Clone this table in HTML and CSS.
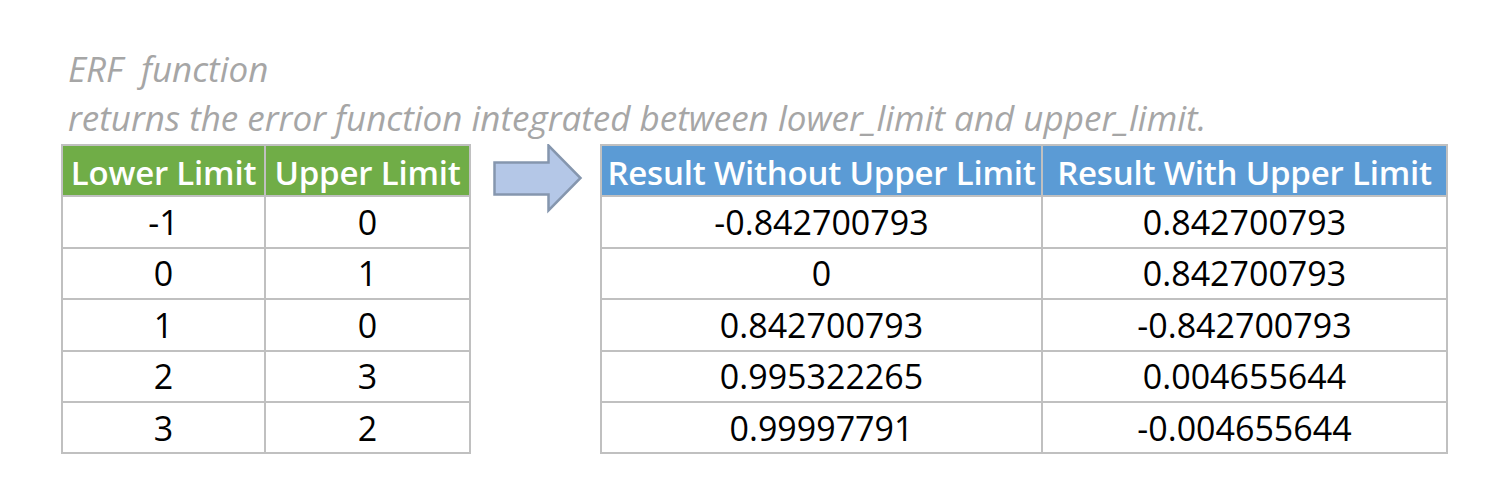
FILE: index.html
```html
<!DOCTYPE html>
<html>
<head>
<meta charset="utf-8">
<link rel="stylesheet" href="styles.css">
</head>
<body>
<div class="page">
  <div class="caption">
    <div class="cap-title">ERF&nbsp; function</div>
    <div class="cap-desc">returns the error function integrated between lower_limit and upper_limit.</div>
  </div>
  <div class="tables">
    <table class="grid grid-left">
      <thead>
        <tr><th class="c-lower">Lower Limit</th><th class="c-upper">Upper Limit</th></tr>
      </thead>
      <tbody>
        <tr><td>-1</td><td>0</td></tr>
        <tr><td>0</td><td>1</td></tr>
        <tr><td>1</td><td>0</td></tr>
        <tr><td>2</td><td>3</td></tr>
        <tr><td>3</td><td>2</td></tr>
      </tbody>
    </table>
    <div class="arrow">
      <svg width="90" height="70" viewBox="0 0 90 70">
        <path d="M1.5 18.5 H55.5 V1.5 L87.5 34 L55.5 66.5 V50.5 H1.5 Z" fill="#b4c7e7" stroke="#8596ae" stroke-width="2.5" stroke-linejoin="miter"/>
      </svg>
    </div>
    <table class="grid grid-right">
      <thead>
        <tr><th class="c-without">Result Without Upper Limit</th><th class="c-with">Result With Upper Limit</th></tr>
      </thead>
      <tbody>
        <tr><td>-0.842700793</td><td>0.842700793</td></tr>
        <tr><td>0</td><td>0.842700793</td></tr>
        <tr><td>0.842700793</td><td>-0.842700793</td></tr>
        <tr><td>0.995322265</td><td>0.004655644</td></tr>
        <tr><td>0.99997791</td><td>-0.004655644</td></tr>
      </tbody>
    </table>
  </div>
</div>
</body>
</html>
```

FILE: styles.css
```css
html, body {
  margin: 0;
  padding: 0;
  background: #ffffff;
}

.page {
  padding: 44px 0 0 61px;
  font-family: "Open Sans", "Liberation Sans", sans-serif;
}

.caption {
  padding-left: 7px;
  color: #a6a6a6;
  font-style: italic;
  font-size: 35px;
  line-height: 49px;
}

.cap-title, .cap-desc {
  white-space: nowrap;
}

.tables {
  display: flex;
  align-items: flex-start;
  margin-top: 2px;
}

.grid {
  border-collapse: collapse;
  font-size: 34px;
  color: #000000;
}

.grid th,
.grid td {
  border: 2px solid #c0c0c0;
  height: 49.4px;
  padding: 0;
  text-align: center;
  white-space: nowrap;
  line-height: 1;
}

.grid th {
  color: #ffffff;
  font-weight: 600;
  font-size: 33px;
  letter-spacing: -0.2px;
  height: 46.4px;
  padding-top: 3px;
}

.grid-left th {
  background: #70ad47;
}

.grid-right th {
  background: #5b9bd5;
}

.c-lower { width: 201px; }
.c-upper { width: 203px; }
.c-without { width: 439px; }
.c-with { width: 403px; }

.arrow {
  width: 90px;
  margin: 0 17px 0 22px;
}

.arrow svg {
  display: block;
}
```
